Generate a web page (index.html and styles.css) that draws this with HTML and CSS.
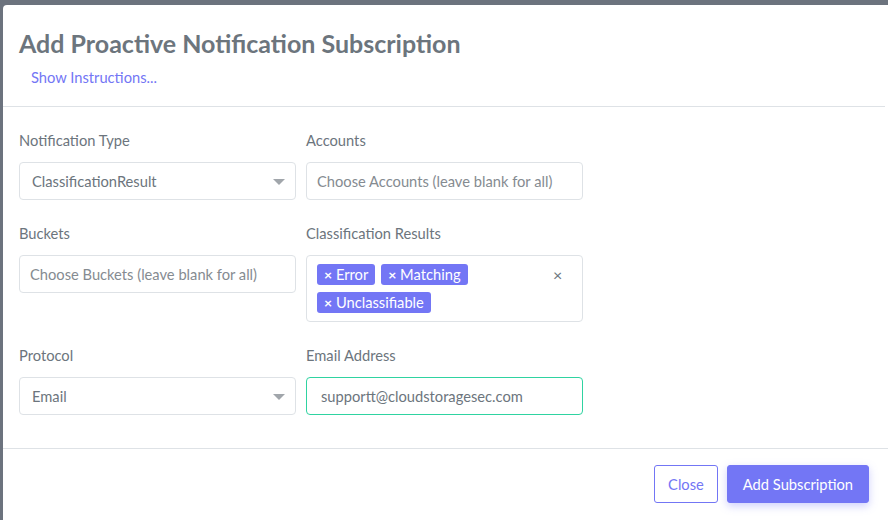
FILE: index.html
```html
<!DOCTYPE html>
<html lang="en">
<head>
	<meta charset="UTF-8">
	<title>Add Proactive Notification Subscription</title>
	<link rel="stylesheet" href="styles.css">
</head>
<body>
	<div class="modal">
		<div class="modal_header">
			<h2 class="modal_title">Add Proactive Notification Subscription</h2>
			<a class="link" href="#">Show Instructions...</a>
		</div>
		<div class="modal_body">
			<div class="form_grid">
				<div class="group">
					<label>Notification Type</label>
					<div class="select">ClassificationResult<span class="caret"></span></div>
				</div>
				<div class="group">
					<label>Accounts</label>
					<div class="input placeholder">Choose Accounts (leave blank for all)</div>
				</div>
				<div class="group">
					<label>Buckets</label>
					<div class="input placeholder">Choose Buckets (leave blank for all)</div>
				</div>
				<div class="group">
					<label>Classification Results</label>
					<div class="multi">
						<div class="tags">
							<span class="tag"><b>×</b> Error</span>
							<span class="tag"><b>×</b> Matching</span>
							<span class="tag"><b>×</b> Unclassifiable</span>
						</div>
						<span class="clear">×</span>
					</div>
				</div>
				<div class="group">
					<label>Protocol</label>
					<div class="select">Email<span class="caret"></span></div>
				</div>
				<div class="group">
					<label>Email Address</label>
					<div class="input focus">supportt@cloudstoragesec.com</div>
				</div>
			</div>
		</div>
		<div class="modal_footer">
			<button class="btn btn_outline">Close</button>
			<button class="btn btn_primary">Add Subscription</button>
		</div>
	</div>
</body>
</html>
```
FILE: styles.css
```css
*{box-sizing:border-box;}
html,body{margin:0;height:100%;overflow:hidden;}
body{background:#6c737e;font-family:"Lato","Liberation Sans",sans-serif;color:#6c757d;padding:5px 0 0 3px;}
.modal{background:#fff;height:100%;border-radius:4px 0 0 0;}
.modal_header{padding:24px 16px 18px;border-bottom:1px solid #dee2e6;margin-right:3px;}
.modal_title{margin:0;font-size:25px;line-height:29px;font-weight:700;color:#6c757d;}
.link{display:inline-block;margin:9px 0 0 12px;font-size:14.7px;line-height:21px;color:#7376f5;text-decoration:none;}
.modal_body{padding:23px 16px 10px;}
.form_grid{display:grid;grid-template-columns:277px 277px;column-gap:10px;}
.group{margin-bottom:23px;}
label{display:block;font-size:14.7px;line-height:21px;margin-bottom:11px;}
.input,.select{height:38px;border:1px solid #dee2e6;border-radius:4px;padding:0 12px;font-size:14.7px;line-height:36px;color:#6c757d;position:relative;}
.placeholder{color:#858b91;padding:0 10px;}
.focus{border-color:#2fd3a1;padding:0 14px;}
.caret{position:absolute;right:10px;top:16px;border-left:6px solid transparent;border-right:6px solid transparent;border-top:6px solid #a1a6ab;}
.multi{height:67px;border:1px solid #dee2e6;border-radius:4px;padding:8px 10px;display:flex;align-items:flex-start;}
.tags{display:flex;flex-wrap:wrap;gap:7px 6px;width:231px;flex:none;}
.tag{background:#7376f5;color:#fff;border-radius:3px;font-size:14.7px;line-height:21px;padding:0 7px;}
.tag b{font-size:14px;}
.clear{margin-left:5px;margin-top:1px;font-size:16px;line-height:20px;color:#6c757d;}
.modal_footer{border-top:1px solid #dee2e6;padding:16px 19px 16px 16px;display:flex;justify-content:flex-end;gap:9px;}
.btn{height:38px;border-radius:3px;font-family:inherit;font-size:14.7px;padding:0 15px;cursor:pointer;}
.btn_outline{background:#fff;border:1px solid #7376f5;color:#7376f5;padding:0 13px;}
.btn_primary{background:#7376f5;border:1px solid #7376f5;color:#fff;box-shadow:0 3px 8px rgba(115,118,245,0.35);}
```
